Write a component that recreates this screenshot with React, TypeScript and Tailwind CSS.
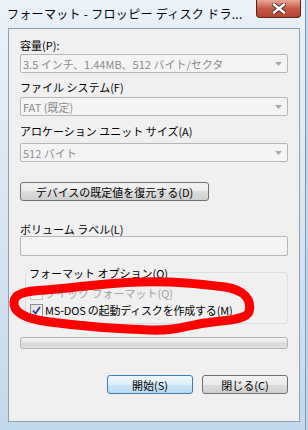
import React from "react";

function ComboArrow() {
  return (
    <svg width="7" height="4" viewBox="0 0 7 4" className="shrink-0">
      <path d="M0 0 L7 0 L3.5 4 Z" fill="#a8a8a8" />
    </svg>
  );
}

function Combo({ text }: { text: string }) {
  return (
    <div className="h-[19px] w-[268px] rounded-[2px] border border-[#b3b7ba] bg-[#f4f4f4] flex items-center pl-[2px] pr-[5px] justify-between">
      <span className="text-[11px] leading-[14px] text-[#8a8a8a]">{text}</span>
      <ComboArrow />
    </div>
  );
}

function Label({ text, className = "" }: { text: string; className?: string }) {
  return <div className={"text-[11px] leading-[14px] text-black " + className}>{text}</div>;
}

function Checkbox({ checked, disabled }: { checked?: boolean; disabled?: boolean }) {
  return (
    <div
      className={
        "w-[13px] h-[13px] border flex items-center justify-center shrink-0 " +
        (disabled ? "border-[#c4c4c4] bg-[#f6f6f6]" : "border-[#8e8f8f] bg-gradient-to-br from-[#dcdcdc] to-[#fbfbfb]")
      }
    >
      {checked && (
        <svg width="9" height="9" viewBox="0 0 9 9">
          <path d="M1 4.5 L3.5 7.5 L8 1" fill="none" stroke="#2a3c95" strokeWidth="1.8" />
        </svg>
      )}
    </div>
  );
}

export default function App() {
  return (
    <div className="w-[308px] h-[430px] relative overflow-hidden bg-[#c3d5e8] font-['Noto_Sans_CJK_JP',sans-serif]">
      <div className="w-[306px] h-[430px] flex flex-col bg-gradient-to-b from-[#eaf1f8] via-[#d9e6f2] to-[#c4d8ec] border-r border-[#7d99b6]">
        {/* Title bar */}
        <div className="h-[28px] flex items-start shrink-0">
          <div className="flex-1 h-[28px] flex items-center pl-[7px] text-[12px] leading-[16px] tracking-[0.3px] text-black whitespace-nowrap overflow-hidden">
            フォーマット - フロッピー ディスク ドラ...
          </div>
          <div className="w-[45px] h-[18px] mr-[4px] rounded-b-[4px] border border-t-0 border-[#5e231a] bg-gradient-to-b from-[#e9a996] via-[#c65a46] to-[#b8412d] flex items-center justify-center">
            <svg width="14" height="11" viewBox="0 0 14 11">
              <path d="M2 1.5 L12 9.5 M12 1.5 L2 9.5" stroke="#3d2b28" strokeWidth="4.2" strokeLinecap="square" />
              <path d="M2 1.5 L12 9.5 M12 1.5 L2 9.5" stroke="#ffffff" strokeWidth="2.4" strokeLinecap="square" />
            </svg>
          </div>
        </div>

        {/* Client area */}
        <div className="ml-[8px] mr-[5px] h-[394px] bg-[#f0f0f0] border border-[#8d9fb3] flex flex-col pl-[11px] pt-[9px]">
          <Label text="容量(P):" />
          <div className="mt-[2px]">
            <Combo text="3.5 インチ、1.44MB、512 バイト/セクタ" />
          </div>

          <Label text="ファイル システム(F)" className="mt-[7px]" />
          <div className="mt-[3px]">
            <Combo text="FAT (既定)" />
          </div>

          <Label text="アロケーション ユニット サイズ(A)" className="mt-[8px]" />
          <div className="mt-[5px]">
            <Combo text="512 バイト" />
          </div>

          <div className="mt-[20px] w-[189px] h-[19px] rounded-[3px] border border-[#707070] bg-[linear-gradient(to_bottom,#f2f2f2_0%,#ebebeb_50%,#dddddd_50%,#cfcfcf_100%)] flex items-center justify-center text-[11px] leading-[14px] text-black">
            デバイスの既定値を復元する(D)
          </div>

          <Label text="ボリューム ラベル(L)" className="mt-[21px]" />
          <div className="w-[268px] h-[20px] rounded-[2px] border border-[#b3b7ba] bg-[#f4f4f4]" />

          {/* Group box */}
          <div className="mt-[16px] ml-[5px] w-[263px] h-[52px] rounded-[3px] border border-[#d5dfe5] flex flex-col">
            <div className="-mt-[7px] ml-[1px] px-[2px] w-fit bg-[#f0f0f0] text-[11px] leading-[14px] text-black">
              フォーマット オプション(O)
            </div>
            <div className="mt-[5px] pl-[4px] h-[16px] flex items-center gap-[2px]">
              <Checkbox disabled />
              <span className="text-[11px] leading-[14px] text-[#a0a0a0]">クイック フォーマット(Q)</span>
            </div>
            <div className="mt-[1px] pl-[4px] h-[16px] flex items-center gap-[2px]">
              <Checkbox checked />
              <span className="text-[11px] leading-[14px] text-black tracking-[-0.2px]">MS-DOS の起動ディスクを作成する(M)</span>
            </div>
          </div>

          {/* Progress bar */}
          <div className="mt-[13px] w-[268px] h-[12px] rounded-[3px] border border-[#b2b2b2] bg-[linear-gradient(to_bottom,#f6f6f6_0%,#e6e6e6_45%,#d8d8d8_55%,#e2e2e2_100%)]" />

          {/* Buttons */}
          <div className="mt-[26px] w-[268px] flex justify-end gap-[9px]">
            <div className="w-[86px] h-[19px] rounded-[3px] border border-[#3c7fb1] bg-[linear-gradient(to_bottom,#eef7fc_0%,#ddeff9_50%,#c9e6f7_50%,#b9dcf2_100%)] flex items-center justify-center text-[11px] leading-[14px] text-black">
              開始(S)
            </div>
            <div className="w-[86px] h-[19px] rounded-[3px] border border-[#707070] bg-[linear-gradient(to_bottom,#f2f2f2_0%,#ebebeb_50%,#dddddd_50%,#cfcfcf_100%)] flex items-center justify-center text-[11px] leading-[14px] text-black">
              閉じる(C)
            </div>
          </div>
        </div>
      </div>

      {/* Red hand-drawn annotation */}
      <svg
        className="absolute top-0 left-0 pointer-events-none"
        width="308"
        height="430"
        viewBox="0 0 308 430"
      >
        <path
          d="M14 302 C14 294,25 291,45 290 C75 288,100 283,140 282 C175 281,200 284,225 287 C245 290,252 300,249 312 C246 320,225 320,205 323 C185 326,175 331,150 330 C120 329,80 326,50 322 C25 319,13 312,14 302 Z"
          fill="none"
          stroke="#ff0000"
          strokeWidth="9"
          strokeLinejoin="round"
        />
      </svg>
    </div>
  );
}
